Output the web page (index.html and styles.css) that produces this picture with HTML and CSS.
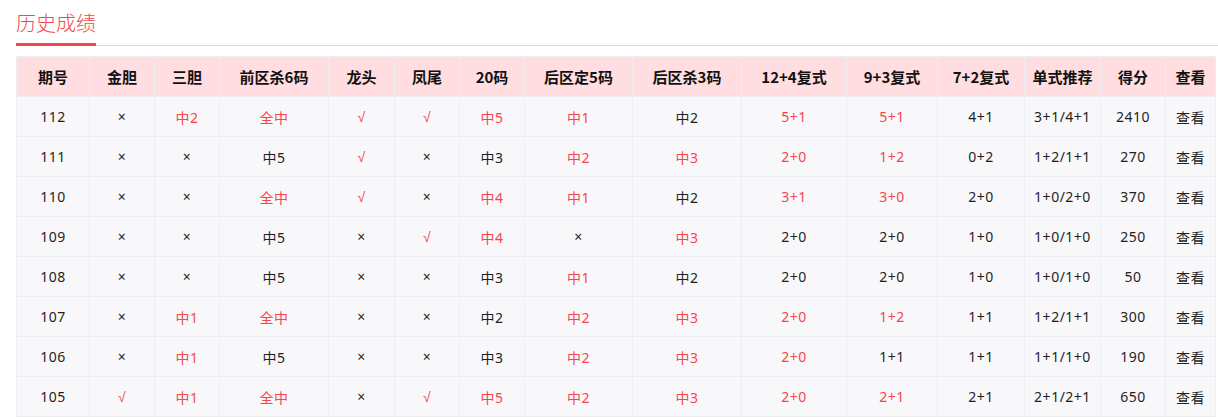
FILE: index.html
```html
<!DOCTYPE html>
<html lang="zh-CN">
<head>
<meta charset="utf-8">
<title>历史成绩</title>
<link rel="stylesheet" href="styles.css">
</head>
<body>
<div class="page">
  <div class="head">
    <span class="title">历史成绩</span>
  </div>
  <table class="grid">
    <colgroup>
      <col class="c1"><col class="c2"><col class="c3"><col class="c4"><col class="c5">
      <col class="c6"><col class="c7"><col class="c8"><col class="c9"><col class="c10">
      <col class="c11"><col class="c12"><col class="c13"><col class="c14"><col class="c15">
    </colgroup>
    <thead>
      <tr>
        <th>期号</th><th>金胆</th><th>三胆</th><th>前区杀6码</th><th>龙头</th><th>凤尾</th><th>20码</th><th>后区定5码</th><th>后区杀3码</th><th>12+4复式</th><th>9+3复式</th><th>7+2复式</th><th>单式推荐</th><th>得分</th><th>查看</th>
      </tr>
    </thead>
    <tbody>
      <tr><td>112</td><td class="x">×</td><td class="r">中2</td><td class="r">全中</td><td class="r v">√</td><td class="r v">√</td><td class="r">中5</td><td class="r">中1</td><td>中2</td><td class="r">5+1</td><td class="r">5+1</td><td>4+1</td><td>3+1/4+1</td><td>2410</td><td>查看</td></tr>
      <tr><td>111</td><td class="x">×</td><td class="x">×</td><td>中5</td><td class="r v">√</td><td class="x">×</td><td>中3</td><td class="r">中2</td><td class="r">中3</td><td class="r">2+0</td><td class="r">1+2</td><td>0+2</td><td>1+2/1+1</td><td>270</td><td>查看</td></tr>
      <tr><td>110</td><td class="x">×</td><td class="x">×</td><td class="r">全中</td><td class="r v">√</td><td class="x">×</td><td class="r">中4</td><td class="r">中1</td><td>中2</td><td class="r">3+1</td><td class="r">3+0</td><td>2+0</td><td>1+0/2+0</td><td>370</td><td>查看</td></tr>
      <tr><td>109</td><td class="x">×</td><td class="x">×</td><td>中5</td><td class="x">×</td><td class="r v">√</td><td class="r">中4</td><td class="x">×</td><td class="r">中3</td><td>2+0</td><td>2+0</td><td>1+0</td><td>1+0/1+0</td><td>250</td><td>查看</td></tr>
      <tr><td>108</td><td class="x">×</td><td class="x">×</td><td>中5</td><td class="x">×</td><td class="x">×</td><td>中3</td><td class="r">中1</td><td>中2</td><td>2+0</td><td>2+0</td><td>1+0</td><td>1+0/1+0</td><td>50</td><td>查看</td></tr>
      <tr><td>107</td><td class="x">×</td><td class="r">中1</td><td class="r">全中</td><td class="x">×</td><td class="x">×</td><td>中2</td><td class="r">中2</td><td class="r">中3</td><td class="r">2+0</td><td class="r">1+2</td><td>1+1</td><td>1+2/1+1</td><td>300</td><td>查看</td></tr>
      <tr><td>106</td><td class="x">×</td><td class="r">中1</td><td>中5</td><td class="x">×</td><td class="x">×</td><td>中3</td><td class="r">中2</td><td class="r">中3</td><td class="r">2+0</td><td>1+1</td><td>1+1</td><td>1+1/1+0</td><td>190</td><td>查看</td></tr>
      <tr><td>105</td><td class="r v">√</td><td class="r">中1</td><td class="r">全中</td><td class="x">×</td><td class="r v">√</td><td class="r">中5</td><td class="r">中2</td><td class="r">中3</td><td class="r">2+0</td><td class="r">2+1</td><td>2+1</td><td>2+1/2+1</td><td>650</td><td>查看</td></tr>
    </tbody>
  </table>
</div>
</body>
</html>
```

FILE: styles.css
```css
html, body {
  margin: 0;
  padding: 0;
  background: #ffffff;
}

body {
  font-family: "Noto Sans CJK SC", sans-serif;
  color: #1f1f1f;
  overflow: hidden;
}

.page {
  padding-left: 16px;
}

.head {
  display: flex;
  padding-top: 9px;
  border-bottom: 1px solid #ffc9cd;
}

.title {
  font-size: 20px;
  line-height: 28px;
  padding-bottom: 6px;
  color: #f4464c;
  border-bottom: 3px solid #f4464c;
  margin-bottom: -1px;
  font-weight: 300;
}

.grid {
  margin-top: 10px;
  width: 1199px;
  border-collapse: collapse;
  table-layout: fixed;
  font-size: 14px;
}

.c1 { width: 73px; }
.c2 { width: 65px; }
.c3 { width: 65px; }
.c4 { width: 109px; }
.c5 { width: 66px; }
.c6 { width: 65px; }
.c7 { width: 65px; }
.c8 { width: 108px; }
.c9 { width: 109px; }
.c10 { width: 105px; }
.c11 { width: 91px; }
.c12 { width: 87px; }
.c13 { width: 76px; }
.c14 { width: 65px; }
.c15 { width: 50px; }

.grid th,
.grid td {
  border: 1px solid #eceef4;
  text-align: center;
  padding: 0;
  height: 39px;
  white-space: nowrap;
}

.grid th {
  background: #ffdde0;
  font-size: 15px;
  font-weight: 700;
  color: #111111;
}

.grid td {
  background: #f8f8fa;
  font-family: "Noto Sans", "Noto Sans CJK SC", sans-serif;
  letter-spacing: 0.5px;
}

.grid td.r {
  color: #f4464c;
}

.grid td.x {
  font-family: "Noto Sans", sans-serif;
}

.grid td.v {
  font-family: "Liberation Sans", sans-serif;
}
```
